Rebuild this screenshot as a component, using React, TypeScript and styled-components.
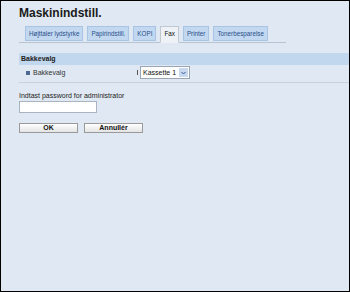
import React from "react";
import styled, { createGlobalStyle } from "styled-components";

const Global = createGlobalStyle`
  html, body { margin: 0; padding: 0; }
  body { width: 350px; height: 292px; overflow: hidden; font-family: "Liberation Sans", Arial, sans-serif; }
`;

const Frame = styled.div`
  box-sizing: border-box;
  width: 350px;
  height: 292px;
  border: 1px solid #000;
  background: #e0e9f3;
  padding: 4px 0 0 18px;
  display: flex;
  flex-direction: column;
`;

const Title = styled.h1`
  margin: 0;
  font-size: 12px;
  font-weight: bold;
  color: #1a1a1a;
  height: 16px;
  line-height: 16px;
`;

const TabBar = styled.div`
  display: flex;
  gap: 4px;
  margin-top: 5px;
  padding-left: 6px;
  width: 261px;
  border-bottom: 1px solid #b8c4d0;
`;

const Tab = styled.div<{ $active?: boolean }>`
  font-size: 6.3px;
  white-space: nowrap;
  height: 13px;
  line-height: 13px;
  padding: 0 3px;
  margin-bottom: 1px;
  color: ${(p) => (p.$active ? "#111" : "#2a4f8a")};
  background: ${(p) => (p.$active ? "#eef2f6" : "#c2d8f0")};
  border: 1px solid ${(p) => (p.$active ? "#c0c8d0" : "#a9c3e2")};
  ${(p) => (p.$active ? "border-bottom-color: #eef2f6; margin-bottom: -1px; height: 15px;" : "")}
`;

const SectionHead = styled.div`
  margin-top: 10px;
  height: 12px;
  line-height: 12px;
  background: #c1d7ee;
  font-size: 7px;
  font-weight: bold;
  color: #1a1a1a;
  padding-left: 2px;
`;

const Row = styled.div`
  display: flex;
  align-items: center;
  height: 15px;
  padding-left: 7px;
  font-size: 7px;
  color: #333;
  border-bottom: 1px solid #c8d2dc;
  padding-bottom: 2px;
`;

const Bullet = styled.span`
  width: 4px;
  height: 4px;
  background: #4a6a94;
  margin-right: 3px;
`;

const Label = styled.span`
  width: 104px;
`;

const Mark = styled.span`
  width: 1px;
  height: 5px;
  background: #555;
  margin-right: 2px;
`;

const Select = styled.div`
  display: flex;
  align-items: center;
  height: 11px;
  border: 1px solid #9aa6b4;
  background: #fff;
  font-size: 7px;
  color: #111;
  padding-left: 2px;
`;

const Arrow = styled.span`
  width: 9px;
  height: 9px;
  margin: 0 1px 0 3px;
  background: #c8d8ee;
  display: flex;
  align-items: center;
  justify-content: center;
`;

const PwLabel = styled.div`
  margin-top: 9px;
  font-size: 7px;
  color: #222;
`;

const Input = styled.div`
  margin-top: 2px;
  width: 76px;
  height: 10px;
  background: #fff;
  border: 1px solid #a8b4c0;
`;

const Buttons = styled.div`
  display: flex;
  gap: 6px;
  margin-top: 10px;
`;

const Button = styled.div`
  box-sizing: border-box;
  width: 59px;
  height: 10px;
  background: linear-gradient(#ffffff, #e4e4e4);
  border: 1px solid #9a9a9a;
  font-size: 7px;
  font-weight: bold;
  line-height: 8px;
  text-align: center;
  color: #111;
`;

export default function App() {
  return (
    <>
      <Global />
      <Frame>
        <Title>Maskinindstill.</Title>
        <TabBar>
          <Tab>Højttaler lydstyrke</Tab>
          <Tab>Papirindstill.</Tab>
          <Tab>KOPI</Tab>
          <Tab $active>Fax</Tab>
          <Tab>Printer</Tab>
          <Tab>Tonerbesparelse</Tab>
        </TabBar>
        <SectionHead>Bakkevalg</SectionHead>
        <Row>
          <Bullet />
          <Label>Bakkevalg</Label>
          <Mark />
          <Select>
            Kassette 1
            <Arrow>
              <svg width="5" height="4" viewBox="0 0 5 4">
                <path d="M0.5 1 L2.5 3 L4.5 1" stroke="#3a5a8a" strokeWidth="1" fill="none" />
              </svg>
            </Arrow>
          </Select>
        </Row>
        <PwLabel>Indtast password for administrator</PwLabel>
        <Input />
        <Buttons>
          <Button>OK</Button>
          <Button>Annullér</Button>
        </Buttons>
      </Frame>
    </>
  );
}
